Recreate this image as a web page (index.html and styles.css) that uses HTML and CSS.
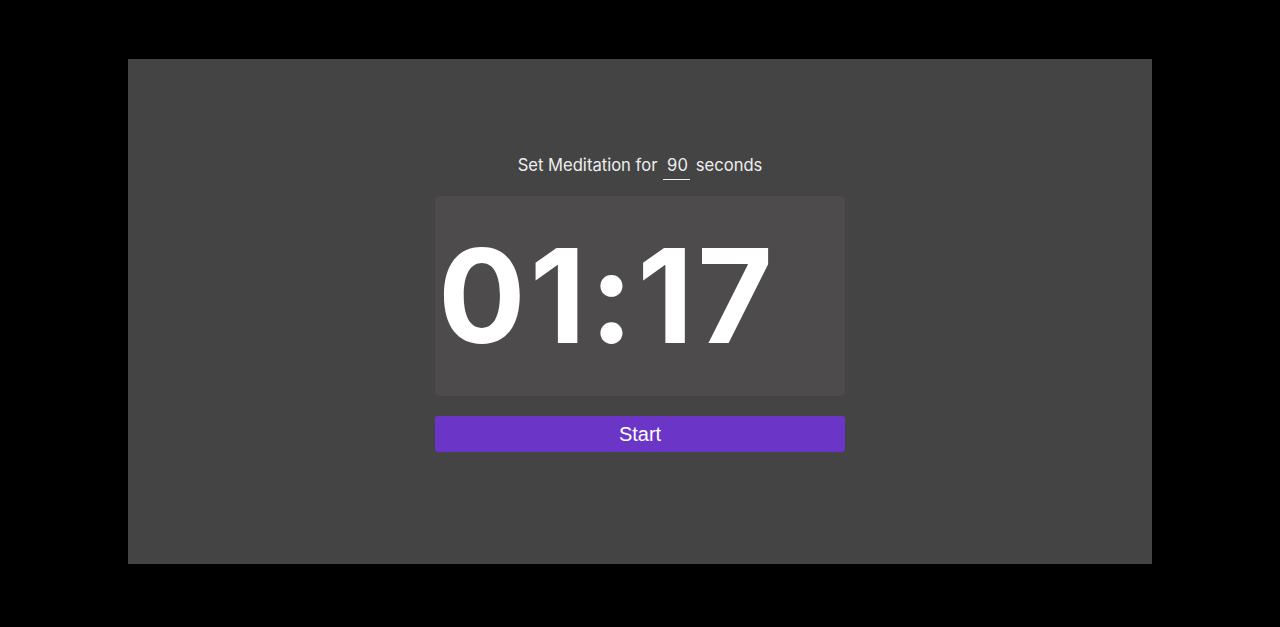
FILE: index.html
```html
<!DOCTYPE html>
<html>
<head>
<meta charset="utf-8">
<link rel="stylesheet" href="styles.css">
</head>
<body>
<div class="frame">
  <div class="app">
    <label class="setter">Set Meditation for <input class="secs" type="text" value="90"> seconds</label>
    <div class="clock">01:17</div>
    <button class="start">Start</button>
  </div>
</div>
</body>
</html>
```
FILE: styles.css
```css
html, body {
  margin: 0;
  padding: 0;
  background: #000;
}
body {
  padding-top: 59px;
  height: 627px;
  box-sizing: border-box;
}
.frame {
  width: 1024px;
  height: 505px;
  margin: 0 0 0 128px;
  background: #444444;
  display: flex;
  justify-content: center;
}
.app {
  width: 410px;
  padding-top: 95px;
  display: flex;
  flex-direction: column;
  align-items: stretch;
}
.setter {
  font-family: Inter, "Noto Sans", sans-serif;
  font-size: 16.6px;
  color: #eeeeee;
  text-align: center;
  height: 25px;
  line-height: 22px;
  white-space: nowrap;
}
.secs {
  box-sizing: border-box;
  width: 27px;
  background: transparent;
  border: none;
  border-bottom: 1px solid #eeeeee;
  color: #eeeeee;
  font-family: Inter, "Noto Sans", sans-serif;
  font-size: 16.6px;
  line-height: 20px;
  padding: 0 0 4px 4px;
  margin: 0 1px;
  outline: none;
}
.clock {
  margin-top: 17px;
  height: 200px;
  background: #4d4b4b;
  border-radius: 5px;
  font-family: Inter, "Noto Sans", sans-serif;
  font-weight: 700;
  font-size: 130px;
  color: #ffffff;
  line-height: 200px;
  padding-left: 3px;
  letter-spacing: 4px;
  white-space: nowrap;
}
.start {
  margin-top: 20px;
  height: 36px;
  background: #6b35c8;
  border: none;
  border-radius: 3px;
  color: #ffffff;
  font-family: "Liberation Sans", Arial, sans-serif;
  font-size: 20px;
  padding: 0;
}
```
